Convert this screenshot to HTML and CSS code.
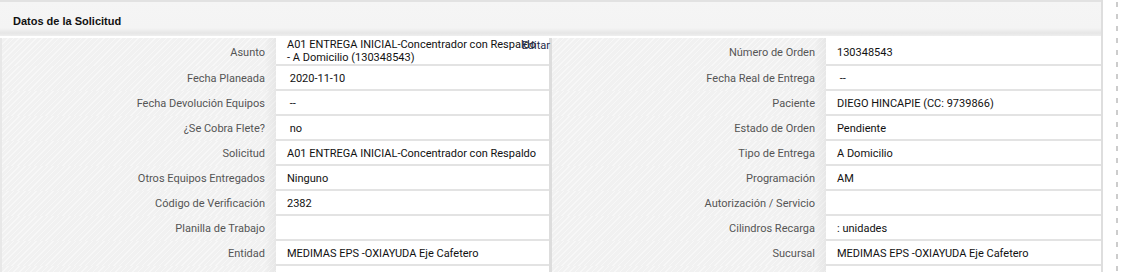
FILE: index.html
```html
<!DOCTYPE html>
<html lang="es">
<head>
<meta charset="utf-8">
<title>Datos de la Solicitud</title>
<link rel="stylesheet" href="styles.css">
</head>
<body>
<div class="page">
  <section class="panel">
    <header class="panel-head"><h2>Datos de la Solicitud</h2></header>
    <div class="grid">
      <div class="sep"></div>

      <div class="lbl">Asunto</div>
      <div class="val val-edit">A01 ENTREGA INICIAL-Concentrador con Respaldo - A Domicilio (130348543)<a class="edit" href="#">Editar</a></div>
      <div class="lbl">Número de Orden</div>
      <div class="val">130348543</div>

      <div class="lbl">Fecha Planeada</div>
      <div class="val">&nbsp;2020-11-10</div>
      <div class="lbl">Fecha Real de Entrega</div>
      <div class="val">&nbsp;--</div>

      <div class="lbl">Fecha Devolución Equipos</div>
      <div class="val">&nbsp;--</div>
      <div class="lbl">Paciente</div>
      <div class="val">DIEGO HINCAPIE (CC: 9739866)</div>

      <div class="lbl">¿Se Cobra Flete?</div>
      <div class="val">&nbsp;no</div>
      <div class="lbl">Estado de Orden</div>
      <div class="val">Pendiente</div>

      <div class="lbl">Solicitud</div>
      <div class="val">A01 ENTREGA INICIAL-Concentrador con Respaldo</div>
      <div class="lbl">Tipo de Entrega</div>
      <div class="val">A Domicilio</div>

      <div class="lbl">Otros Equipos Entregados</div>
      <div class="val">Ninguno</div>
      <div class="lbl">Programación</div>
      <div class="val">AM</div>

      <div class="lbl">Código de Verificación</div>
      <div class="val">2382</div>
      <div class="lbl">Autorización / Servicio</div>
      <div class="val"></div>

      <div class="lbl">Planilla de Trabajo</div>
      <div class="val"></div>
      <div class="lbl">Cilindros Recarga</div>
      <div class="val">: unidades</div>

      <div class="lbl">Entidad</div>
      <div class="val">MEDIMAS EPS -OXIAYUDA Eje Cafetero</div>
      <div class="lbl">Sucursal</div>
      <div class="val">MEDIMAS EPS -OXIAYUDA Eje Cafetero</div>

      <div class="lbl"></div>
      <div class="val"></div>
      <div class="lbl"></div>
      <div class="val"></div>
    </div>
  </section>
  <div class="dash"></div>
</div>
</body>
</html>
```

FILE: styles.css
```css
html, body {
  margin: 0;
  padding: 0;
  background: #fff;
}

body {
  font-family: Roboto, "Liberation Sans", Arial, sans-serif;
  font-size: 11px;
  color: #000;
  overflow: hidden;
}

.page {
  display: flex;
  align-items: stretch;
  height: 272px;
  overflow: hidden;
}

.panel {
  width: 1101px;
  border-right: 2px solid #dedede;
  flex: none;
}

.panel-head {
  height: 34px;
  border-top: 2px solid #e2e2e2;
  background: linear-gradient(to bottom, #f5f5f5 0, #f4f4f4 26px, #e6e6e6 31px, #eeeeee 34px);
  display: flex;
  align-items: center;
  padding-left: 13px;
  box-sizing: content-box;
}

.panel-head h2 {
  margin: 0;
  font-family: "Liberation Sans", Arial, sans-serif;
  font-size: 11px;
  font-weight: bold;
  color: #111;
  position: relative;
  top: 2px;
}

.grid {
  margin-top: 2px;
  display: grid;
  grid-template-columns: 274px 273px 3px 274px 275px;
  border-left: 2px solid #e8e8e8;
  width: 1099px;
}

.sep {
  grid-column: 3;
  grid-row: 1 / span 10;
  background: #dddddd;
}

.lbl,
.val {
  box-sizing: border-box;
  min-height: 25px;
  display: flex;
  align-items: center;
  line-height: 13px;
  padding-top: 2px;
}

.lbl {
  justify-content: flex-end;
  padding-right: 11px;
  padding-left: 10px;
  padding-bottom: 2px;
  color: #555;
  background-color: #f1f1f1;
  background-image:
    linear-gradient(to right, rgba(0,0,0,0) 0, rgba(0,0,0,0) calc(100% - 12px), rgba(0,0,0,0.045) 100%),
    repeating-linear-gradient(135deg, rgba(255,255,255,0.45) 0 1px, rgba(255,255,255,0) 1px 4px);
}

.val {
  padding-right: 10px;
  padding-left: 11px;
  background: #fff;
  border-bottom: 2px solid #e3e3e3;
  white-space: pre-wrap;
  color: #111;
}

.val-edit {
  position: relative;
  padding-top: 0;
  min-height: 28px;
}

.edit {
  position: absolute;
  right: -1px;
  top: 1px;
  color: #1d2a4a;
  text-decoration: none;
}

.dash {
  flex: none;
  width: 2px;
  margin-left: 13px;
  background: repeating-linear-gradient(to bottom, transparent 0 2px, #cccccc 2px 7px, transparent 7px 12px);
}
```
